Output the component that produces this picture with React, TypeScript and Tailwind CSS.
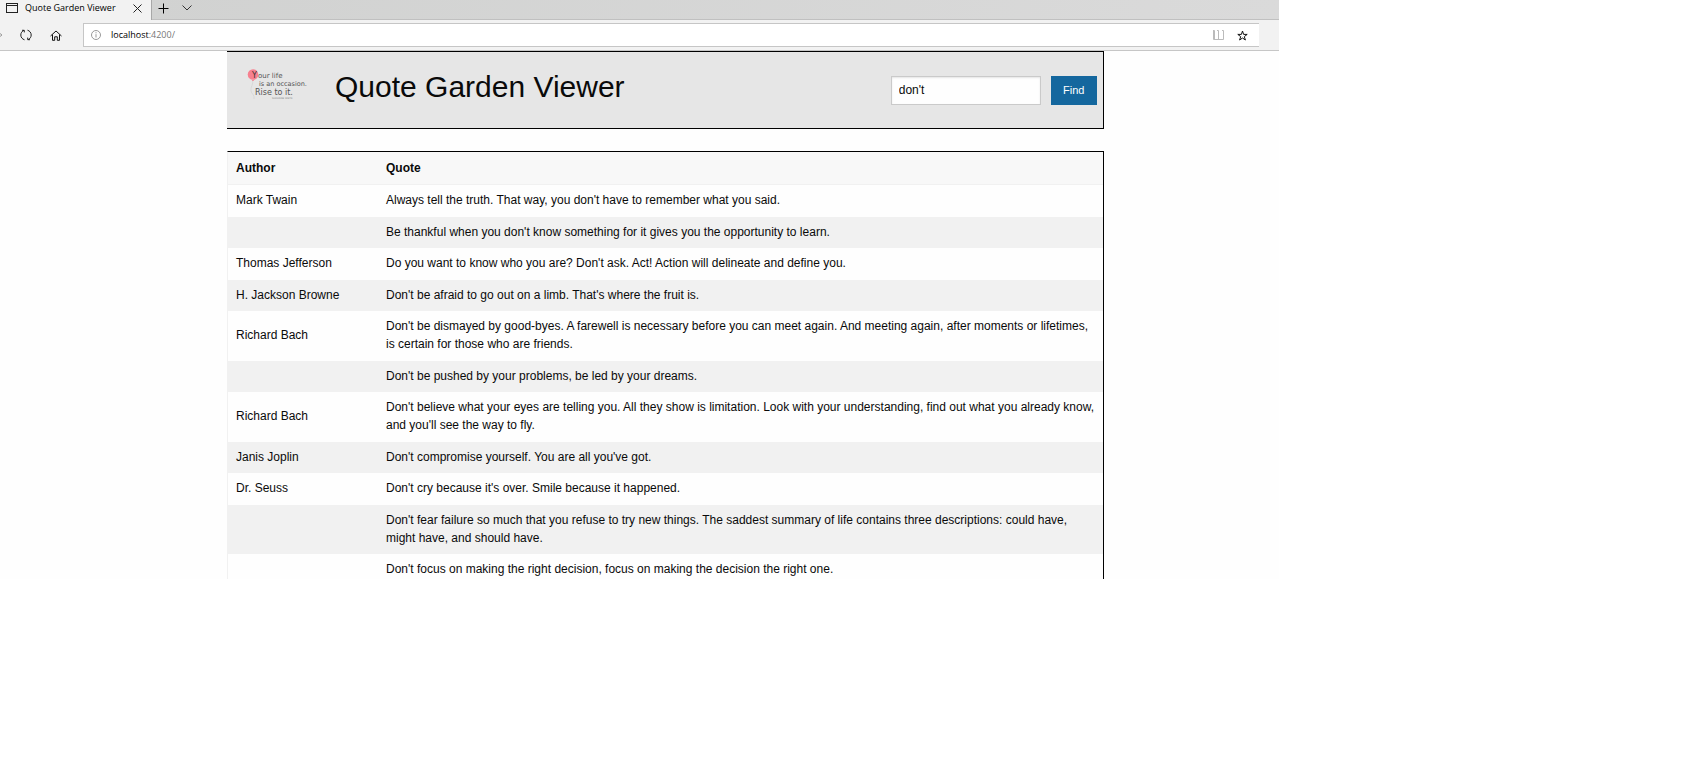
import { useState } from "react";
import type { ReactNode } from "react";

type Quote = { author: string; text: string };

const QUOTES: Quote[] = [
  { author: "Mark Twain", text: "Always tell the truth. That way, you don't have to remember what you said." },
  { author: "", text: "Be thankful when you don't know something for it gives you the opportunity to learn." },
  { author: "Thomas Jefferson", text: "Do you want to know who you are? Don't ask. Act! Action will delineate and define you." },
  { author: "H. Jackson Browne", text: "Don't be afraid to go out on a limb. That's where the fruit is." },
  {
    author: "Richard Bach",
    text: "Don't be dismayed by good-byes. A farewell is necessary before you can meet again. And meeting again, after moments or lifetimes, is certain for those who are friends.",
  },
  { author: "", text: "Don't be pushed by your problems, be led by your dreams." },
  {
    author: "Richard Bach",
    text: "Don't believe what your eyes are telling you. All they show is limitation. Look with your understanding, find out what you already know, and you'll see the way to fly.",
  },
  { author: "Janis Joplin", text: "Don't compromise yourself. You are all you've got." },
  { author: "Dr. Seuss", text: "Don't cry because it's over. Smile because it happened." },
  {
    author: "",
    text: "Don't fear failure so much that you refuse to try new things. The saddest summary of life contains three descriptions: could have, might have, and should have.",
  },
  { author: "", text: "Don't focus on making the right decision, focus on making the decision the right one." },
];

function IconButton({ label, className, children }: { label: string; className: string; children: ReactNode }) {
  return (
    <button type="button" aria-label={label} className={`flex shrink-0 items-center justify-center ${className}`}>
      {children}
    </button>
  );
}

function TabStrip() {
  return (
    <div className="flex h-5 shrink-0 bg-gradient-to-r from-[#d0d1d0] to-[#dadada]">
      <div className="flex w-[152px] items-center border-r border-[#a8a8a8] bg-[#f2f2f2] pb-1 pl-1.5">
        <svg width="12" height="11" viewBox="0 0 12 11" fill="none" stroke="#222" className="shrink-0">
          <rect x="0.5" y="0.5" width="11" height="9" />
          <path d="M0.5 2.5H11.5" />
        </svg>
        <span className="ml-[7px] flex-1 whitespace-nowrap text-[9px] leading-4 text-black">Quote Garden Viewer</span>
        <IconButton label="Close tab" className="mr-2 size-3">
          <svg width="9" height="9" viewBox="0 0 9 9" fill="none" stroke="#222">
            <path d="M0.5 0.5L8.5 8.5M8.5 0.5L0.5 8.5" />
          </svg>
        </IconButton>
      </div>
      <div className="flex flex-1 items-center gap-3 border-b border-[#c0c0c0] pb-[3px] pl-[5px]">
        <IconButton label="New tab" className="size-3">
          <svg width="11" height="11" viewBox="0 0 11 11" fill="none" stroke="#000">
            <path d="M5.5 0.5V10.5M0.5 5.5H10.5" />
          </svg>
        </IconButton>
        <IconButton label="Tab list" className="size-3">
          <svg width="10" height="6" viewBox="0 0 10 6" fill="none" stroke="#333">
            <path d="M0.5 0.5L5 5L9.5 0.5" />
          </svg>
        </IconButton>
      </div>
    </div>
  );
}

function AddressBar() {
  return (
    <div className="flex h-[31px] shrink-0 items-center border-b border-[#c6c6c6] bg-[#f2f2f2] pr-5">
      <svg width="3" height="4" viewBox="0 0 3 4" fill="none" stroke="#999" className="shrink-0">
        <path d="M0 0.5L2 2L0 3.5" />
      </svg>
      <IconButton label="Refresh" className="ml-[17px] size-3">
        <svg width="12" height="12" viewBox="0 0 12 12" fill="none" stroke="#222">
          <path d="M4.5 10.8C2.300 10.200 0.800 8.300 0.800 6C0.800 4 2 2.200 4 1.300M2 1.300H4.300V3.400" />
          <path d="M7.500 1.200C9.700 1.800 11.200 3.700 11.200 6C11.200 8 10 9.800 8 10.700M10 10.700H7.700V8.600" />
        </svg>
      </IconButton>
      <IconButton label="Home" className="ml-[18px] size-3">
        <svg width="12" height="11" viewBox="0 0 12 11" fill="none" stroke="#111">
          <path d="M0.500 6L6 1L11.500 6M2.500 4.600V10.300H4.700V6.800H7.300V10.300H9.500V4.600" />
        </svg>
      </IconButton>
      <div className="ml-[21px] flex h-6 flex-1 items-center border border-r-0 border-[#c6c6c6] bg-white pl-[7px] pr-2.5">
        <svg width="10" height="10" viewBox="0 0 10 10" fill="none" stroke="#999" className="shrink-0">
          <circle cx="5" cy="5" r="4.500" />
          <path d="M5 4.200V7.500M5 2.200V3.300" />
        </svg>
        <a href="http://localhost:4200/" className="ml-2.5 flex-1 text-[9px] leading-4 text-black">
          localhost<span className="text-[#777]">:4200/</span>
        </a>
        <IconButton label="Reading view" className="mr-3 size-3">
          <svg width="11" height="10" viewBox="0 0 11 10" fill="none" stroke="#bbb">
            <path d="M0 0.500H1.500V9.500M0.500 0.500V9.500H10.500V0.500H9M4 0.500H5.500V9.500" />
          </svg>
        </IconButton>
        <IconButton label="Add to favorites" className="size-3">
          <svg width="11" height="11" viewBox="0 0 11 11" fill="none" stroke="#111">
            <path d="M5.500 1L6.600 4.400L10.200 4.400L7.300 6.600L8.400 10L5.500 8L2.600 10L3.700 6.600L0.800 4.400L4.400 4.400Z" />
          </svg>
        </IconButton>
      </div>
    </div>
  );
}

function Logo() {
  return (
    <svg width="62" height="32" viewBox="0 0 62 32" role="img" aria-label="Your life is an occasion. Rise to it." className="shrink-0">
      <path d="M5.500 11C7 15 3 18 4 22C4.500 25 8 26 7 30" fill="none" stroke="#d4d4d4" strokeWidth="0.800" />
      <circle cx="6" cy="5.500" r="5.300" fill="#f7808f" />
      <path d="M6 10.500L4.800 12H7.200Z" fill="#f7808f" />
      <g fill="#555" fontFamily="'DejaVu Sans', sans-serif" fontSize="7">
        <text x="5" y="9" fontSize="8" fill="#333">Y</text>
        <text x="11" y="9">our life</text>
        <text x="12" y="17" fontSize="6.500">is an occasion.</text>
        <text x="8" y="26" fontSize="8">Rise to it.</text>
        <text x="25" y="30" fontSize="2.500" fill="#888">SUZANNE WEYN</text>
      </g>
    </svg>
  );
}

function Header() {
  const [term, setTerm] = useState("don't");
  return (
    <header className="flex h-[78px] items-start border border-l-0 border-black bg-[#e6e6e6] pl-5 pr-1.5">
      <div className="pt-[17px]">
        <Logo />
      </div>
      <h1 className="ml-[26px] flex-1 pt-4 text-[30px] leading-[38px] text-[#0a0a0a]">Quote Garden Viewer</h1>
      <form className="flex gap-2.5 pt-6" onSubmit={(e) => e.preventDefault()}>
        <input
          type="text"
          aria-label="Search quotes"
          value={term}
          onChange={(e) => setTerm(e.target.value)}
          className="h-[29px] w-[150px] border border-[#cacaca] bg-[#fefefe] px-[7px] pb-0.5 text-xs text-[#0a0a0a] shadow-[inset_0_1px_2px_rgba(10,10,10,0.1)] outline-none"
        />
        <button type="submit" className="h-[29px] w-[46px] bg-[#14679e] text-[11px] text-white">
          Find
        </button>
      </form>
    </header>
  );
}

function QuoteTable() {
  return (
    <table className="mt-[22px] w-full table-fixed border-separate border-spacing-0 border border-b-0 border-black border-l-[#f1f1f1] text-left text-xs leading-[18px] text-[#0a0a0a]">
      <thead className="bg-[#f8f8f8]">
        <tr>
          <th scope="col" className="w-[150px] border-b border-[#f1f1f1] px-2 py-[7px] font-bold">Author</th>
          <th scope="col" className="border-b border-[#f1f1f1] px-2 py-[7px] font-bold">Quote</th>
        </tr>
      </thead>
      <tbody>
        {QUOTES.map((q) => (
          <tr key={q.text} className="group bg-[#fefefe] even:bg-[#f1f1f1]">
            <td className="px-2 pb-2 pt-1.5 group-even:pb-[7px]">{q.author}</td>
            <td className="px-2 pb-2 pt-1.5 group-even:pb-[7px]">{q.text}</td>
          </tr>
        ))}
      </tbody>
    </table>
  );
}

export default function App() {
  return (
    <div className="min-h-screen bg-white">
      <div className="flex h-[75vh] w-3/4 flex-col overflow-hidden bg-[#fefefe] font-['Open_Sans',sans-serif]">
        <TabStrip />
        <AddressBar />
        <main className="min-h-0 flex-1 overflow-hidden pl-[227px] pr-[175px] font-['Liberation_Sans',Arial,sans-serif]">
          <Header />
          <QuoteTable />
        </main>
      </div>
    </div>
  );
}
